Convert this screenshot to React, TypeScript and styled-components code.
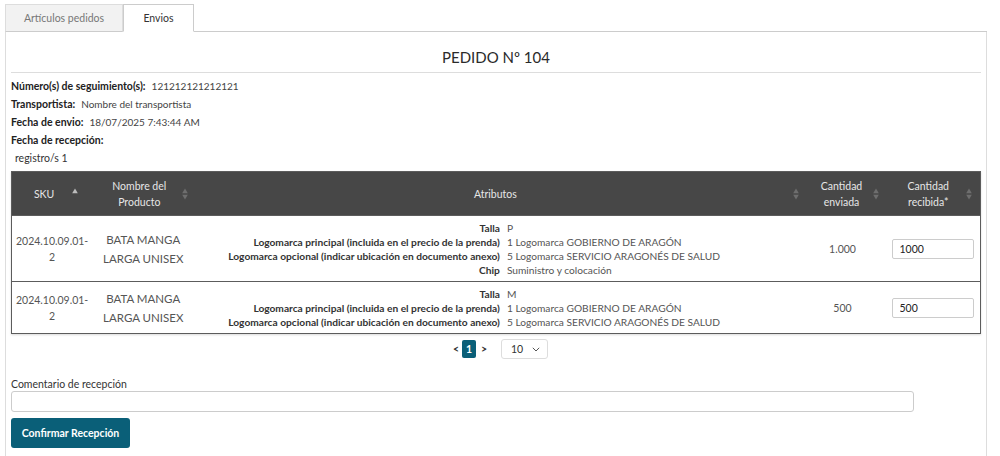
import React from 'react';
import styled, { createGlobalStyle } from 'styled-components';

const FONT = `Lato, "Open Sans", "Liberation Sans", sans-serif`;

const GlobalStyle = createGlobalStyle`
  body {
    margin: 0;
    background: #fff;
    font-family: ${FONT};
    color: #333;
  }
  * { box-sizing: border-box; }
`;

const Page = styled.div`
  width: 987px;
  padding: 4px 0 0 5px;
`;

const TabBar = styled.div`
  display: flex;
  height: 28px;
  border-bottom: 1px solid #ccc;
`;

const Tab = styled.div<{ $active?: boolean }>`
  display: flex;
  align-items: center;
  justify-content: center;
  width: ${p => (p.$active ? '71px' : '118px')};
  font-size: 10.5px;
  color: ${p => (p.$active ? '#333' : '#777')};
  background: ${p => (p.$active ? '#fff' : '#f2f2f2')};
  border: 1px solid ${p => (p.$active ? '#ccc' : '#ddd')};
  border-bottom: 1px solid ${p => (p.$active ? '#fff' : '#ccc')};
  margin-bottom: -1px;
`;

const Panel = styled.div`
  border: 1px solid #ddd;
  border-top: none;
  padding: 0 5px 20px;
`;

const Title = styled.h1`
  margin: 0;
  padding: 14px 0 4px;
  line-height: 22px;
  font-size: 15px;
  font-weight: 400;
  text-align: center;
  color: #2a2a2a;
  border-bottom: 1px solid #ddd;
`;

const InfoList = styled.div`
  margin-top: 4px;
`;

const InfoRow = styled.div`
  display: flex;
  align-items: baseline;
  gap: 6px;
  line-height: 18px;
  font-size: 10.5px;
`;

const InfoLabel = styled.span`
  font-weight: 700;
  color: #222;
`;

const InfoValue = styled.span`
  font-size: 10px;
  color: #444;
`;

const Records = styled.div`
  padding-left: 4px;
  line-height: 18px;
  font-size: 10.5px;
  color: #333;
`;

const Table = styled.table`
  width: 100%;
  margin-top: 4px;
  border-collapse: collapse;
  border: 1px solid #5c5c5c;
  box-shadow: 0 1px 2px rgba(0, 0, 0, 0.15);
  font-size: 10.5px;
`;

const HeadRow = styled.tr`
  height: 44px;
  background: #474747;
`;

const HeadCell = styled.th<{ $w?: number; $pr?: number }>`
  width: ${p => (p.$w ? `${p.$w}px` : 'auto')};
  padding: 0 ${p => p.$pr ?? 8}px 0 4px;
  font-weight: 400;
  color: #e6e6e6;
`;

const HeadInner = styled.div`
  display: flex;
  align-items: center;
`;

const HeadLabel = styled.span`
  flex: 1;
  text-align: center;
  line-height: 16px;
`;

const BodyRow = styled.tr`
  border-top: 1px solid #5c5c5c;
  background: #fff;
`;

const Cell = styled.td<{ $align?: string; $pl?: number; $pr?: number }>`
  padding: 5px ${p => p.$pr ?? 4}px 4px ${p => p.$pl ?? 4}px;
  text-align: ${p => p.$align ?? 'center'};
  vertical-align: middle;
  color: #555;
`;

const Sku = styled.div`
  line-height: 16px;
  font-size: 10.5px;
`;

const Product = styled.div`
  line-height: 19px;
  font-size: 11.5px;
  color: #555;
`;

const AttrGrid = styled.div`
  display: grid;
  grid-template-columns: 1fr 1fr;
  column-gap: 7px;
  padding-left: 6px;
  line-height: 14px;
  font-size: 10.2px;
`;

const AttrLabel = styled.span`
  text-align: right;
  font-weight: 700;
  color: #333;
`;

const AttrValue = styled.span`
  text-align: left;
  color: #555;
`;

const QtyInput = styled.input`
  width: 82px;
  height: 20px;
  padding: 0 7px;
  border: 1px solid #ccc;
  border-radius: 2px;
  font-family: ${FONT};
  font-size: 10.5px;
  color: #222;
`;

const Pager = styled.div`
  display: flex;
  align-items: center;
  justify-content: center;
  margin: 5px 0 18px;
  padding-left: 7px;
  font-size: 10.5px;
`;

const PagerArrow = styled.span<{ $ml?: number }>`
  width: 10px;
  margin-left: ${p => p.$ml ?? 0}px;
  text-align: center;
  font-weight: 700;
  color: #333;
`;

const PageBtn = styled.span`
  display: flex;
  align-items: center;
  justify-content: center;
  width: 14px;
  height: 18px;
  margin-left: 1px;
  border-radius: 2px;
  background: #0a5f78;
  color: #fff;
  font-weight: 700;
`;

const PageSize = styled.div`
  display: flex;
  align-items: center;
  justify-content: space-between;
  width: 47px;
  height: 20px;
  margin-left: 12px;
  padding: 0 7px 0 9px;
  border: 1px solid #ddd;
  border-radius: 3px;
  color: #333;
`;

const FieldLabel = styled.label`
  display: block;
  line-height: 14px;
  font-size: 10.5px;
  color: #333;
`;

const CommentInput = styled.input`
  display: block;
  width: 903px;
  height: 21px;
  border: 1px solid #ccc;
  border-radius: 3px;
  font-family: ${FONT};
`;

const ConfirmButton = styled.button`
  margin-top: 6px;
  width: 119px;
  height: 30px;
  border: none;
  border-radius: 3px;
  background: #0a5f78;
  color: #fff;
  font-family: ${FONT};
  font-weight: 700;
  font-size: 10.5px;
`;

const SortIcon: React.FC<{ up?: boolean }> = ({ up }) => (
  <svg width="6" height="12" viewBox="0 0 6 12">
    <path d="M3 0.5 L5.8 5.2 L0.2 5.2 Z" fill={up ? '#bdbdbd' : '#6e6e6e'} />
    <path d="M3 11.5 L5.8 6.8 L0.2 6.8 Z" fill={up ? '#474747' : '#6e6e6e'} />
  </svg>
);

const Chevron = () => (
  <svg width="8" height="5" viewBox="0 0 8 5">
    <path d="M0.8 0.8 L4 4 L7.2 0.8" fill="none" stroke="#555" strokeWidth="1" />
  </svg>
);

type Attr = [string, string];

const rows: { sku: string[]; attrs: Attr[]; sent: string; received: string }[] = [
  {
    sku: ['2024.10.09.01-', '2'],
    attrs: [
      ['Talla', 'P'],
      ['Logomarca principal (incluida en el precio de la prenda)', '1 Logomarca GOBIERNO DE ARAGÓN'],
      ['Logomarca opcional (indicar ubicación en documento anexo)', '5 Logomarca SERVICIO ARAGONÉS DE SALUD'],
      ['Chip', 'Suministro y colocación'],
    ],
    sent: '1.000',
    received: '1000',
  },
  {
    sku: ['2024.10.09.01-', '2'],
    attrs: [
      ['Talla', 'M'],
      ['Logomarca principal (incluida en el precio de la prenda)', '1 Logomarca GOBIERNO DE ARAGÓN'],
      ['Logomarca opcional (indicar ubicación en documento anexo)', '5 Logomarca SERVICIO ARAGONÉS DE SALUD'],
    ],
    sent: '500',
    received: '500',
  },
];

const App: React.FC = () => (
  <Page>
    <GlobalStyle />
    <TabBar>
      <Tab>Artículos pedidos</Tab>
      <Tab $active>Envios</Tab>
    </TabBar>
    <Panel>
      <Title>PEDIDO Nº 104</Title>
      <InfoList>
        <InfoRow>
          <InfoLabel>Número(s) de seguimiento(s):</InfoLabel>
          <InfoValue>121212121212121</InfoValue>
        </InfoRow>
        <InfoRow>
          <InfoLabel>Transportista:</InfoLabel>
          <InfoValue>Nombre del transportista</InfoValue>
        </InfoRow>
        <InfoRow>
          <InfoLabel>Fecha de envio:</InfoLabel>
          <InfoValue>18/07/2025 7:43:44 AM</InfoValue>
        </InfoRow>
        <InfoRow>
          <InfoLabel>Fecha de recepción:</InfoLabel>
        </InfoRow>
      </InfoList>
      <Records>registro/s 1</Records>

      <Table>
        <thead>
          <HeadRow>
            <HeadCell $w={79} $pr={14}>
              <HeadInner><HeadLabel>SKU</HeadLabel><SortIcon up /></HeadInner>
            </HeadCell>
            <HeadCell $w={102} $pr={6}>
              <HeadInner><HeadLabel>Nombre del<br />Producto</HeadLabel><SortIcon /></HeadInner>
            </HeadCell>
            <HeadCell>
              <HeadInner><HeadLabel>Atributos</HeadLabel><SortIcon /></HeadInner>
            </HeadCell>
            <HeadCell $w={80}>
              <HeadInner><HeadLabel>Cantidad<br />enviada</HeadLabel><SortIcon /></HeadInner>
            </HeadCell>
            <HeadCell $w={94}>
              <HeadInner><HeadLabel>Cantidad<br />recibida*</HeadLabel><SortIcon /></HeadInner>
            </HeadCell>
          </HeadRow>
        </thead>
        <tbody>
          {rows.map((row, i) => (
            <BodyRow key={i}>
              <Cell>
                <Sku>{row.sku[0]}<br />{row.sku[1]}</Sku>
              </Cell>
              <Cell>
                <Product>BATA MANGA<br />LARGA UNISEX</Product>
              </Cell>
              <Cell>
                <AttrGrid>
                  {row.attrs.map(([label, value]) => (
                    <React.Fragment key={label}>
                      <AttrLabel>{label}</AttrLabel>
                      <AttrValue>{value}</AttrValue>
                    </React.Fragment>
                  ))}
                </AttrGrid>
              </Cell>
              <Cell $pr={12}>{row.sent}</Cell>
              <Cell $align="left" $pl={5} $pr={6}>
                <QtyInput defaultValue={row.received} />
              </Cell>
            </BodyRow>
          ))}
        </tbody>
      </Table>

      <Pager>
        <PagerArrow>&lt;</PagerArrow>
        <PageBtn>1</PageBtn>
        <PagerArrow $ml={3}>&gt;</PagerArrow>
        <PageSize>
          <span>10</span>
          <Chevron />
        </PageSize>
      </Pager>

      <FieldLabel>Comentario de recepción</FieldLabel>
      <CommentInput />
      <ConfirmButton>Confirmar Recepción</ConfirmButton>
    </Panel>
  </Page>
);

export default App;
